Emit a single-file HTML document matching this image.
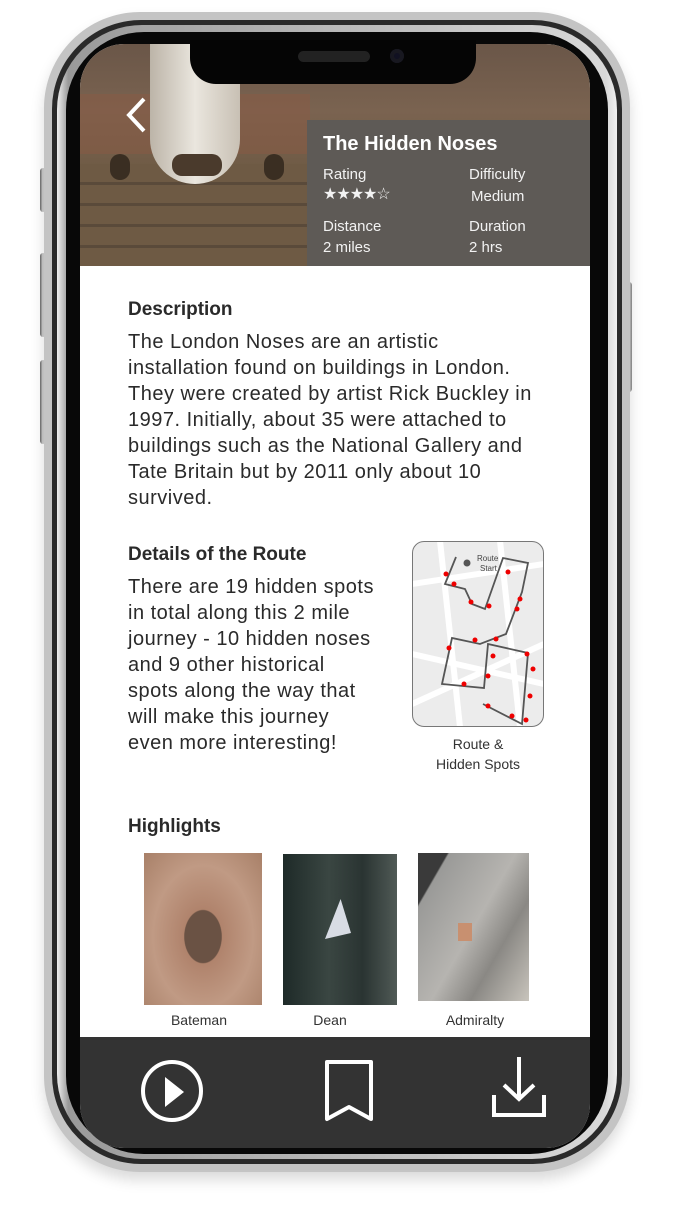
<!DOCTYPE html>
<html><head><meta charset="utf-8"><style>
*{margin:0;padding:0;box-sizing:border-box}
body{width:673px;height:1213px;background:#fff;position:relative;overflow:hidden;font-family:"Liberation Sans",sans-serif;color:#2a2a2a}
.abs{position:absolute}
.btn{position:absolute;left:40px;width:6px;border-radius:3px;background:linear-gradient(90deg,#666,#ddd,#888)}
.l1{left:44px;top:12px;width:586px;height:1160px;border-radius:96px;background:#c4c4c4;box-shadow:0 8px 14px rgba(0,0,0,.15)}
.l2{left:52px;top:20px;width:570px;height:1144px;border-radius:89px;background:#2a2a2a}
.l3{left:57px;top:25px;width:560px;height:1134px;border-radius:85px;background:linear-gradient(90deg,#f0f0f0,#9a9a9a 2%,#d8d8d8 98%,#f0f0f0);}
.l4{left:66px;top:32px;width:542px;height:1122px;border-radius:78px;background:#080808}
.screen{left:80px;top:44px;width:510px;height:1104px;border-radius:44px;overflow:hidden;background:#fff}
.hero{left:0;top:0;width:510px;height:222px;background:linear-gradient(180deg,#6a5648 0%,#7a6350 30%,#6e5a44 60%,#7a6446 100%)}
.panel{left:227px;top:76px;width:283px;height:146px;background:#5e5a56;color:#fff}
.p{font-size:15px;color:#f2f2f2;position:absolute}
h3{font-size:19px;font-weight:bold;color:#2a2a2a;position:absolute}
.txt{position:absolute;font-size:20px;letter-spacing:0.5px;line-height:26px;white-space:nowrap;color:#2a2a2a}
.cap{position:absolute;font-size:14px;color:#333;text-align:center}
</style></head><body>
<div class="btn" style="top:168px;height:44px"></div>
<div class="btn" style="top:253px;height:84px"></div>
<div class="btn" style="top:360px;height:84px"></div>
<div class="btn" style="left:626px;top:282px;height:110px"></div>
<div class="abs l1"></div>
<div class="abs l2"></div>
<div class="abs l3"></div>
<div class="abs l4"></div>
<div class="abs screen">
  <div class="abs hero">
    <div class="abs" style="left:0;top:50px;width:230px;height:60px;background:#8a5a44;opacity:.5"></div>
    <div class="abs" style="left:0;top:120px;width:230px;height:102px;background:repeating-linear-gradient(180deg,#6e5a44 0 18px,#5a4a3a 18px 21px)"></div>
    <div class="abs" style="left:70px;top:0;width:90px;height:140px;border-radius:0 0 45px 45px;background:linear-gradient(90deg,#bcb4a8,#eae6de,#c8c0b4)"></div>
    <div class="abs" style="left:92px;top:110px;width:50px;height:22px;border-radius:10px;background:#4a3a2c"></div>
    <div class="abs" style="left:30px;top:110px;width:20px;height:26px;border-radius:10px;background:#3a2e22"></div>
    <div class="abs" style="left:184px;top:110px;width:20px;height:26px;border-radius:10px;background:#3a2e22"></div>
    <svg class="abs" style="left:44px;top:52px" width="24" height="38"><path d="M20 3 L5 19 L20 35" stroke="#fff" stroke-width="4" fill="none"/></svg>
  </div>
  <div class="abs panel">
    <div class="abs" style="left:16px;top:13px;font-size:20px;font-weight:bold">The Hidden Noses</div>
    <div class="p" style="left:16px;top:46px">Rating</div>
    <div class="p" style="left:16px;top:64px;font-size:16px;letter-spacing:-1px">★★★★☆</div>
    <div class="p" style="left:162px;top:46px">Difficulty</div>
    <div class="p" style="left:164px;top:68px">Medium</div>
    <div class="p" style="left:16px;top:98px">Distance</div>
    <div class="p" style="left:16px;top:119px">2 miles</div>
    <div class="p" style="left:162px;top:98px">Duration</div>
    <div class="p" style="left:162px;top:119px">2 hrs</div>
  </div>
  <h3 style="left:48px;top:255px">Description</h3>
  <div class="txt" style="left:48px;top:285px">The London Noses are an artistic<br>installation found on buildings in London.<br>They were created by artist Rick Buckley in<br>1997. Initially, about 35 were attached to<br>buildings such as the National Gallery and<br>Tate Britain but by 2011 only about 10<br>survived.</div>
  <h3 style="left:48px;top:500px">Details of the Route</h3>
  <div class="txt" style="left:48px;top:530px">There are 19 hidden spots<br>in total along this 2 mile<br>journey - 10 hidden noses<br>and 9 other historical<br>spots along the way that<br>will make this journey<br>even more interesting!</div>
  <div class="abs" style="left:332px;top:497px;width:132px;height:186px;border:1.5px solid #777;border-radius:12px;background:#ececec;overflow:hidden">
    <svg width="132" height="186" viewBox="332 497 132 186" style="position:absolute;left:-1px;top:-1px">
      <g stroke="#fff" stroke-width="6" fill="none"><path d="M332 540 L464 520"/><path d="M360 497 L380 683"/><path d="M332 610 L464 640"/><path d="M420 497 L440 683"/><path d="M332 660 L464 600"/></g>
      <path d="M376 513 L365 540 L385 545 L392 560 L405 565 L423 514 L448 519 L442 548 L426 590 L400 600 L372 594 L362 640 L404 644 L408 600 L448 609 L442 680 L403 660" stroke="#555" stroke-width="1.8" fill="none"/>
      <circle cx="387" cy="519" r="3.5" fill="#555"/>
      <text x="397" y="517" font-size="8" fill="#444" font-family="Liberation Sans">Route</text>
      <text x="400" y="527" font-size="8" fill="#444" font-family="Liberation Sans">Start</text>
      <g fill="#e00"><circle cx="366" cy="530" r="2.5"/><circle cx="374" cy="540" r="2.5"/><circle cx="391" cy="558" r="2.5"/><circle cx="409" cy="562" r="2.5"/><circle cx="428" cy="528" r="2.5"/><circle cx="440" cy="555" r="2.5"/><circle cx="437" cy="565" r="2.5"/><circle cx="395" cy="596" r="2.5"/><circle cx="369" cy="604" r="2.5"/><circle cx="416" cy="595" r="2.5"/><circle cx="413" cy="612" r="2.5"/><circle cx="447" cy="610" r="2.5"/><circle cx="453" cy="625" r="2.5"/><circle cx="408" cy="632" r="2.5"/><circle cx="384" cy="640" r="2.5"/><circle cx="450" cy="652" r="2.5"/><circle cx="408" cy="662" r="2.5"/><circle cx="432" cy="672" r="2.5"/><circle cx="446" cy="676" r="2.5"/></g>
    </svg>
  </div>
  <div class="cap" style="left:332px;top:690px;width:132px;line-height:20px">Route &amp;<br>Hidden Spots</div>
  <h3 style="left:48px;top:772px">Highlights</h3>
  <div class="abs" style="left:64px;top:809px;width:118px;height:152px;background:radial-gradient(ellipse at 50% 55%,#6a5244 0 22%,#b0836c 23%,#c09a84 60%,#a88068)"></div>
  <div class="abs" style="left:203px;top:810px;width:114px;height:151px;background:linear-gradient(90deg,#1e2a28,#3a4642 40%,#2a3432 70%,#505a56)"><div class="abs" style="left:42px;top:45px;width:26px;height:40px;background:#d8dce4;clip-path:polygon(60% 0,100% 85%,0 100%)"></div></div>
  <div class="abs" style="left:338px;top:809px;width:111px;height:148px;background:linear-gradient(120deg,#3a3a3a 0 15%,#9a9a98 16%,#b6b4b0 50%,#8a8884 70%,#c8c4bc)"><div class="abs" style="left:40px;top:70px;width:14px;height:18px;background:#c89070"></div></div>
  <div class="cap" style="left:64px;top:968px;width:110px">Bateman</div>
  <div class="cap" style="left:200px;top:968px;width:100px">Dean</div>
  <div class="cap" style="left:330px;top:968px;width:130px">Admiralty</div>
  <div class="abs" style="left:0;top:993px;width:510px;height:111px;background:#333">
    <svg class="abs" style="left:60px;top:22px" width="66" height="66"><circle cx="32" cy="32" r="29" stroke="#fff" stroke-width="4" fill="none"/><path d="M25 18 L44 33 L25 48 Z" fill="#fff"/></svg>
    <svg class="abs" style="left:244px;top:22px" width="52" height="64"><path d="M3 3 H47 V60 L25 48 L3 60 Z" stroke="#fff" stroke-width="4" fill="none" stroke-linejoin="round"/></svg>
    <svg class="abs" style="left:410px;top:18px" width="60" height="64"><path d="M29 2 V44 M14 30 L29 44 L44 30 M4 40 V60 H54 V40" stroke="#fff" stroke-width="4" fill="none"/></svg>
  </div>
</div>
<div class="abs" style="left:190px;top:40px;width:286px;height:44px;background:#050505;border-radius:0 0 26px 26px"></div>
<div class="abs" style="left:298px;top:51px;width:72px;height:11px;border-radius:6px;background:#222"></div>
<div class="abs" style="left:390px;top:49px;width:14px;height:14px;border-radius:7px;background:#112;box-shadow:inset 0 0 0 4px #181820"></div>
</body></html>
